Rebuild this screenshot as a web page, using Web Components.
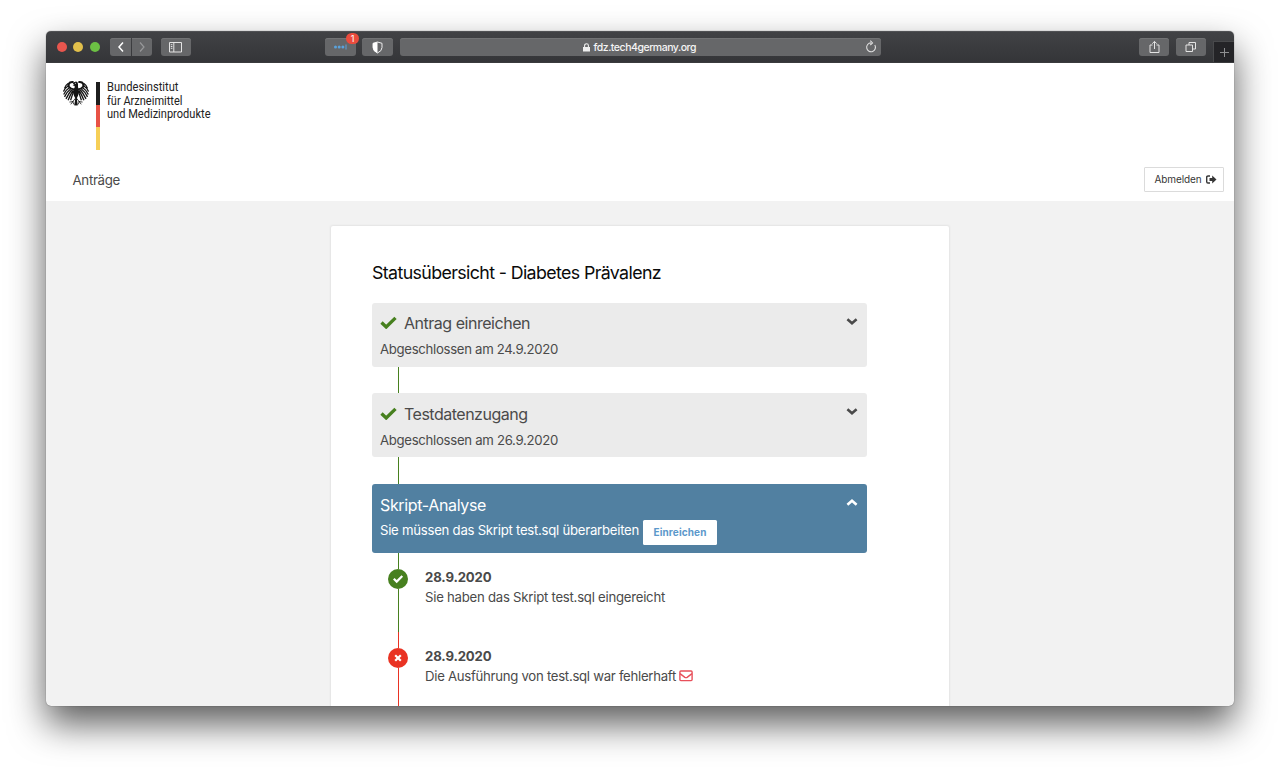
<!DOCTYPE html>
<html lang="de">
<head>
<meta charset="utf-8">
<title>Statusübersicht</title>
<style>
html,body{margin:0;height:767px;overflow:hidden;background:#fff;font-family:Inter,"Liberation Sans",sans-serif}
</style>
</head>
<body>
<browser-window>
  <tool-bar slot="bar"></tool-bar>
  <site-header></site-header>
  <status-card>
    <fit-text slot="title" w="289">Statusübersicht - Diabetes Prävalenz</fit-text>
    <status-step done>
      <fit-text slot="title" w="126">Antrag einreichen</fit-text>
      <fit-text slot="info" w="178">Abgeschlossen am 24.9.2020</fit-text>
    </status-step>
    <status-step done>
      <fit-text slot="title" w="123.500">Testdatenzugang</fit-text>
      <fit-text slot="info" w="178">Abgeschlossen am 26.9.2020</fit-text>
    </status-step>
    <status-step active>
      <fit-text slot="title" w="106">Skript-Analyse</fit-text>
      <fit-text slot="info" w="259">Sie müssen das Skript test.sql überarbeiten</fit-text>
      <submit-button slot="info"></submit-button>
    </status-step>
    <event-item kind="ok">
      <fit-text slot="date" w="66.500">28.9.2020</fit-text>
      <fit-text w="240">Sie haben das Skript test.sql eingereicht</fit-text>
    </event-item>
    <event-item kind="error">
      <fit-text slot="date" w="66.500">28.9.2020</fit-text>
      <fit-text w="251">Die Ausführung von test.sql war fehlerhaft</fit-text>
      <svg slot="icon" width="14" height="12" viewBox="0 0 14 12" fill="none" stroke="#e8505b" stroke-width="1.400"><rect x=".9" y="1" width="12.200" height="9.600" rx="1"/><path d="M1 3.600 5.900 7.300Q7 8 8.100 7.300L13 3.600"/></svg>
    </event-item>
  </status-card>
</browser-window>
<script>
function define(name, html, setup) {
  customElements.define(name, class extends HTMLElement {
    constructor() {
      super();
      const t = document.createElement('template');
      t.innerHTML = html;
      this.attachShadow({mode: 'open'}).append(t.content.cloneNode(true));
    }
    connectedCallback() { if (setup) setup(this, this.shadowRoot); }
  });
}

define('browser-window', `
<style>
:host{display:flex;flex-direction:column;box-sizing:border-box;margin:31px 46px 0;width:1188px;height:675px;border-radius:5px;box-shadow:0 0 1px rgba(0,0,0,.65),0 18px 36px rgba(0,0,0,.64);overflow:hidden;background:#f2f2f2}
main{flex:1;min-height:0;overflow:hidden}
</style>
<slot name="bar"></slot><main><slot></slot></main>`);

define('tool-bar', `
<style>
:host{display:flex;align-items:center;box-sizing:border-box;height:32px;flex:none;padding-left:10.500px;background:linear-gradient(#414245,#343538);border-top:1px solid #505154;border-bottom:1px solid #3a3b3d;position:relative}
i{width:10px;height:10px;border-radius:50%;margin-right:6.500px}
.b{display:flex;align-items:center;justify-content:center;height:18px;width:30px;border-radius:3px;background:#666769;box-shadow:inset 0 1px #727375;position:relative}
.url{box-sizing:border-box;width:481px;margin-left:7px;padding-right:2px;gap:3.500px;font-size:10.500px;font-weight:500;color:#f5f5f5;position:relative}
.url .reload{position:absolute;right:4px;top:2px}
.badge{position:absolute;left:21px;top:-5px;height:11px;width:13px;border-radius:6px;background:#ea4b3d;color:#fff;font-size:9px;line-height:11px;text-align:center}
.plus{align-self:flex-end;box-sizing:border-box;width:21px;height:21px;background:#242427;border:1px solid #48494b;border-right:0;border-bottom:0;display:flex;align-items:center;justify-content:center;margin-left:7px}
svg{display:block}
</style>
<i style="background:#e8564e"></i><i style="background:#e1bf4b"></i><i style="background:#6cc044"></i>
<span class="b" style="width:21px;margin-left:4px;border-radius:3px 0 0 3px"><svg width="8" height="12" fill="none" stroke="#fff" stroke-width="1.500"><path d="M6 1.500 2 6l4 4.500"/></svg></span>
<span class="b" style="width:20px;margin-left:1px;border-radius:0 3px 3px 0"><svg width="8" height="12" fill="none" stroke="#97989a" stroke-width="1.200"><path d="M2 1.500 6 6l-4 4.500"/></svg></span>
<span class="b" style="margin-left:9px"><svg width="14" height="11" fill="none" stroke="#e4e4e4"><path d="M.5.500h12v9.500H.5zM4.800.500V10M1.800 2.700h1.600M1.800 4.500h1.600M1.800 6.300h1.600"/></svg></span>
<span class="b" style="margin-left:134px;width:31px"><svg width="15" height="8"><g fill="#5aa2dc"><circle cx="2.500" cy="4" r="1.500"/><circle cx="6.200" cy="4" r="1.500"/><circle cx="9.900" cy="4" r="1.500"/><path d="M12.500 1.500h1v5h-1z"/></g></svg><span class="badge">1</span></span>
<span class="b" style="margin-left:6px;width:31px"><svg width="11" height="13"><path d="M5.500 1 10 2.300V6.500Q10 10 5.500 12 1 10 1 6.500V2.300Z" fill="none" stroke="#eee"/><path d="M5.500 1 1 2.300V6.500Q1 10 5.500 12Z" fill="#fff"/></svg></span>
<span class="b url"><svg width="7" height="9"><path d="M0 4h7v4.500H0z" fill="#eee"/><path d="M1.600 4.500V2.600a1.900 1.900 0 0 1 3.800 0V4.500" fill="none" stroke="#eee" stroke-width="1.100"/></svg><fit-text w="102.500">fdz.tech4germany.org</fit-text>
<svg class="reload" width="12" height="13" fill="none" stroke="#dedede" stroke-width="1.100"><path d="M9.800 5A4.400 4.400 0 1 1 6 2.900M5.300.700 7.500 2.900 5.300 5"/></svg></span>
<span class="b" style="margin-left:258px"><svg width="11" height="14" fill="none" stroke="#e4e4e4"><path d="M3.500 5H1v7.500h9V5H7.500M5.500 9V1.500M3.200 3.700 5.500 1.400l2.300 2.300"/></svg></span>
<span class="b" style="margin-left:7px"><svg width="12" height="12" fill="none" stroke="#e4e4e4"><path d="M1 4h6.500v6.500H1zM4 4V1.500h6.500V8H7.500"/></svg></span>
<span class="plus"><svg width="10" height="10" stroke="#8e8f91"><path d="M5.500 1v9M1 5.500h9"/></svg></span>`);

define('site-header', `
<style>
:host{display:flex;flex-direction:column;justify-content:space-between;box-sizing:border-box;height:138px;background:#fff;padding:17px 10px 9px 17px}
.brand{display:flex;align-items:flex-start}
.bar{display:grid;grid-template-rows:23px 22px 23px;width:4px;margin:2px 7px 0 7px}
.name{display:flex;flex-direction:column;font:12.500px/13.500px Roboto,sans-serif;color:#222}
nav{display:flex;justify-content:space-between;align-items:center;padding-left:9.500px;font-size:13.300px;color:#4a4a4a}
.out{display:flex;align-items:center;gap:4.500px;box-sizing:border-box;width:80px;height:25px;padding-left:9.500px;border:1px solid #dbdbdb;border-radius:1px;font-size:10px;color:#363636}
.out fit-text{margin-top:-1px}
</style>
<div class="brand">
<eagle-mark></eagle-mark>
<div class="bar"><b style="background:#1d1d1d"></b><b style="background:#e85245"></b><b style="background:#f6cf57"></b></div>
<div class="name"><fit-text scale w="71.500">Bundesinstitut</fit-text><fit-text scale w="75.500">für Arzneimittel</fit-text><fit-text scale w="103.500">und Medizinprodukte</fit-text></div>
</div>
<nav><fit-text w="47.500">Anträge</fit-text><span class="out"><fit-text w="47">Abmelden</fit-text><svg width="11" height="9" viewBox="0 0 11 9"><path d="M4 1H2Q.7 1 .7 2.200v4.600Q.7 8 2 8h2" fill="none" stroke="#363636" stroke-width="1.400"/><path d="M3.500 3.100h2.700V.600L10.500 4.500 6.200 8.400V5.900H3.500Z" fill="#363636"/></svg></span></nav>`);

define('eagle-mark', `
<style>:host{display:block;width:26px;height:27px}svg{display:block}</style>
<svg width="26" height="27" viewBox="0 0 26 27" fill="none" stroke="#151515" stroke-linecap="round">
<defs><g id="w">
<path stroke-width="2" d="M11 9.400Q7.300 9 5.900 6.800 4.800 4.400 7 2.500 8.300 1.800 9.800 2"/>
<path stroke-width="1.300" stroke-linecap="butt" d="M5.400 3.200Q2.300 5.200 1.500 8.400M5.300 5.700Q2 7.800 .5 11.600M6.300 7.800Q2.300 10.400 .7 14.500M7.600 9.100Q3.800 12 1.500 16.900M8.800 9.800Q5.600 13.500 3 18.900M10 10.300Q7.300 14.500 5.100 20.300M11 10.800Q9 15.500 7.600 20.300"/>
<path stroke-width=".8" d="M12.300 18.500 9.800 21.600M9.800 21.600 6.800 22M9.800 21.600 8 24M9.800 21.600 10.600 24M12.700 20 11.600 25"/>
</g></defs>
<use href="#w"/><use href="#w" transform="matrix(-1 0 0 1 26 0)"/>
<path fill="#151515" stroke="none" d="M10.600 9Q12 8 11.700 6L9.600 5.300 11.400 4.600 9.600 3.900Q10.700 1.300 13.200 1.400 15.300 1.700 15 4.500 14.700 8 15.600 9L15.700 13Q15 16.500 13.900 18L14.300 25Q13 26 11.800 25L12.200 18Q10.800 16 10.300 13Z"/>
<circle cx="12.400" cy="3.200" r=".5" fill="#fff" stroke="none"/>
</svg>`);

define('status-card', `
<style>
:host{display:block;box-sizing:border-box;width:618px;min-height:520px;margin:25px auto 0;padding:36px 82px 0 41px;background:#fff;border-radius:2px;box-shadow:0 0 2px 1px rgba(10,10,10,.06)}
h1{margin:0 0 18.700px;font-size:17.800px;line-height:22px;font-weight:400;color:#0a0a0a}
</style>
<h1><slot name="title"></slot></h1><slot></slot>`);

define('status-step', `
<style>
:host{display:block;color:#4a4a4a}
.box{display:grid;grid-template-columns:1fr auto;align-content:start;box-sizing:border-box;height:64px;padding:8px 9.500px 0 8px;border-radius:3px;background:#ebebeb}
.title{display:flex;align-items:center;gap:7.500px;height:25px;font-size:16px}
.info{display:flex;align-items:center;gap:4px;height:26.500px;font-size:13.200px;grid-column:1/3}
.check{display:none;margin:-1px 0 0 -.5px}
.chev{margin-top:6px}
.line{height:26.700px;width:1.500px;margin-left:25.600px;background:#47801f}
:host([done]) .check{display:block}
:host([active]){color:#fff}
:host([active]) .box{background:#5180a1;height:69px}
:host([active]) .chev{transform:rotate(180deg);align-self:start}
:host([active]) .line{display:none}
</style>
<div class="box"><div class="title"><svg class="check" width="17" height="13" viewBox="0 0 17 13"><path d="M1.500 6.500 6.200 11 15.500 1.800" fill="none" stroke="#47801f" stroke-width="3.300"/></svg><slot name="title"></slot></div>
<svg class="chev" width="12" height="9" viewBox="0 0 12 9"><path d="M1.400 2.200 6 6.300 10.600 2.200" fill="none" stroke="currentColor" stroke-width="2.500"/></svg>
<div class="info"><slot name="info"></slot></div></div><div class="line"></div>`);

define('submit-button', `
<style>:host{display:flex;align-items:center;justify-content:center;width:74px;height:25px;border-radius:1.500px;background:#fff;color:#5b98cb;font-size:10px;font-weight:700;margin-top:4px}</style>
<fit-text w="53">Einreichen</fit-text>`);

define('event-item', `
<style>
:host{display:grid;grid-template-columns:53px 1fr;height:79px;color:#4a4a4a;font-size:13.200px;--c:#47801f}
:host([kind=error]){--c:#e93323}
.rail{display:flex;flex-direction:column;align-items:center;width:20px;margin-left:16.300px}
.rail i{width:1.500px;background:var(--c)}
.dot{width:20px;height:20px;border-radius:50%;background:var(--c);flex:none}
.dot path{display:none}
:host([kind=ok]) .ok,:host([kind=error]) .no{display:block}
.text{padding-top:14px;line-height:20px}
.date{font-weight:700;height:20px}
.msg{display:flex;align-items:center;gap:3px;height:20px}
</style>
<div class="rail"><i style="height:15.700px"></i><svg class="dot" viewBox="0 0 20 20" fill="none" stroke="#fff" stroke-width="2.200"><path class="ok" d="M5.800 9.800 8.700 12.600 14.300 7"/><path class="no" d="M7.200 7.200 12.800 12.800M12.800 7.200 7.200 12.800"/></svg><i style="flex:1"></i></div>
<div class="text"><div class="date"><slot name="date"></slot></div><div class="msg"><slot></slot><slot name="icon"></slot></div></div>`);

/* Sets its text to an exact advance width, by tracking or by condensing the glyphs.
   Registered last, so that it measures with the styles of its ancestors in place. */
define('fit-text', `
<style>:host{display:inline-block;white-space:nowrap}span{display:inline-block;transform-origin:0 50%}</style><span><slot></slot></span>`,
(el, root) => {
  const s = root.querySelector('span'), w = +el.getAttribute('w');
  const now = s.getBoundingClientRect().width;
  if (el.hasAttribute('scale')) {
    s.style.transform = `scaleX(${w / now})`;
    el.style.width = w + 'px';
  } else {
    s.style.letterSpacing = (w - now) / el.textContent.length + 'px';
  }
});
</script>
</body>
</html>
